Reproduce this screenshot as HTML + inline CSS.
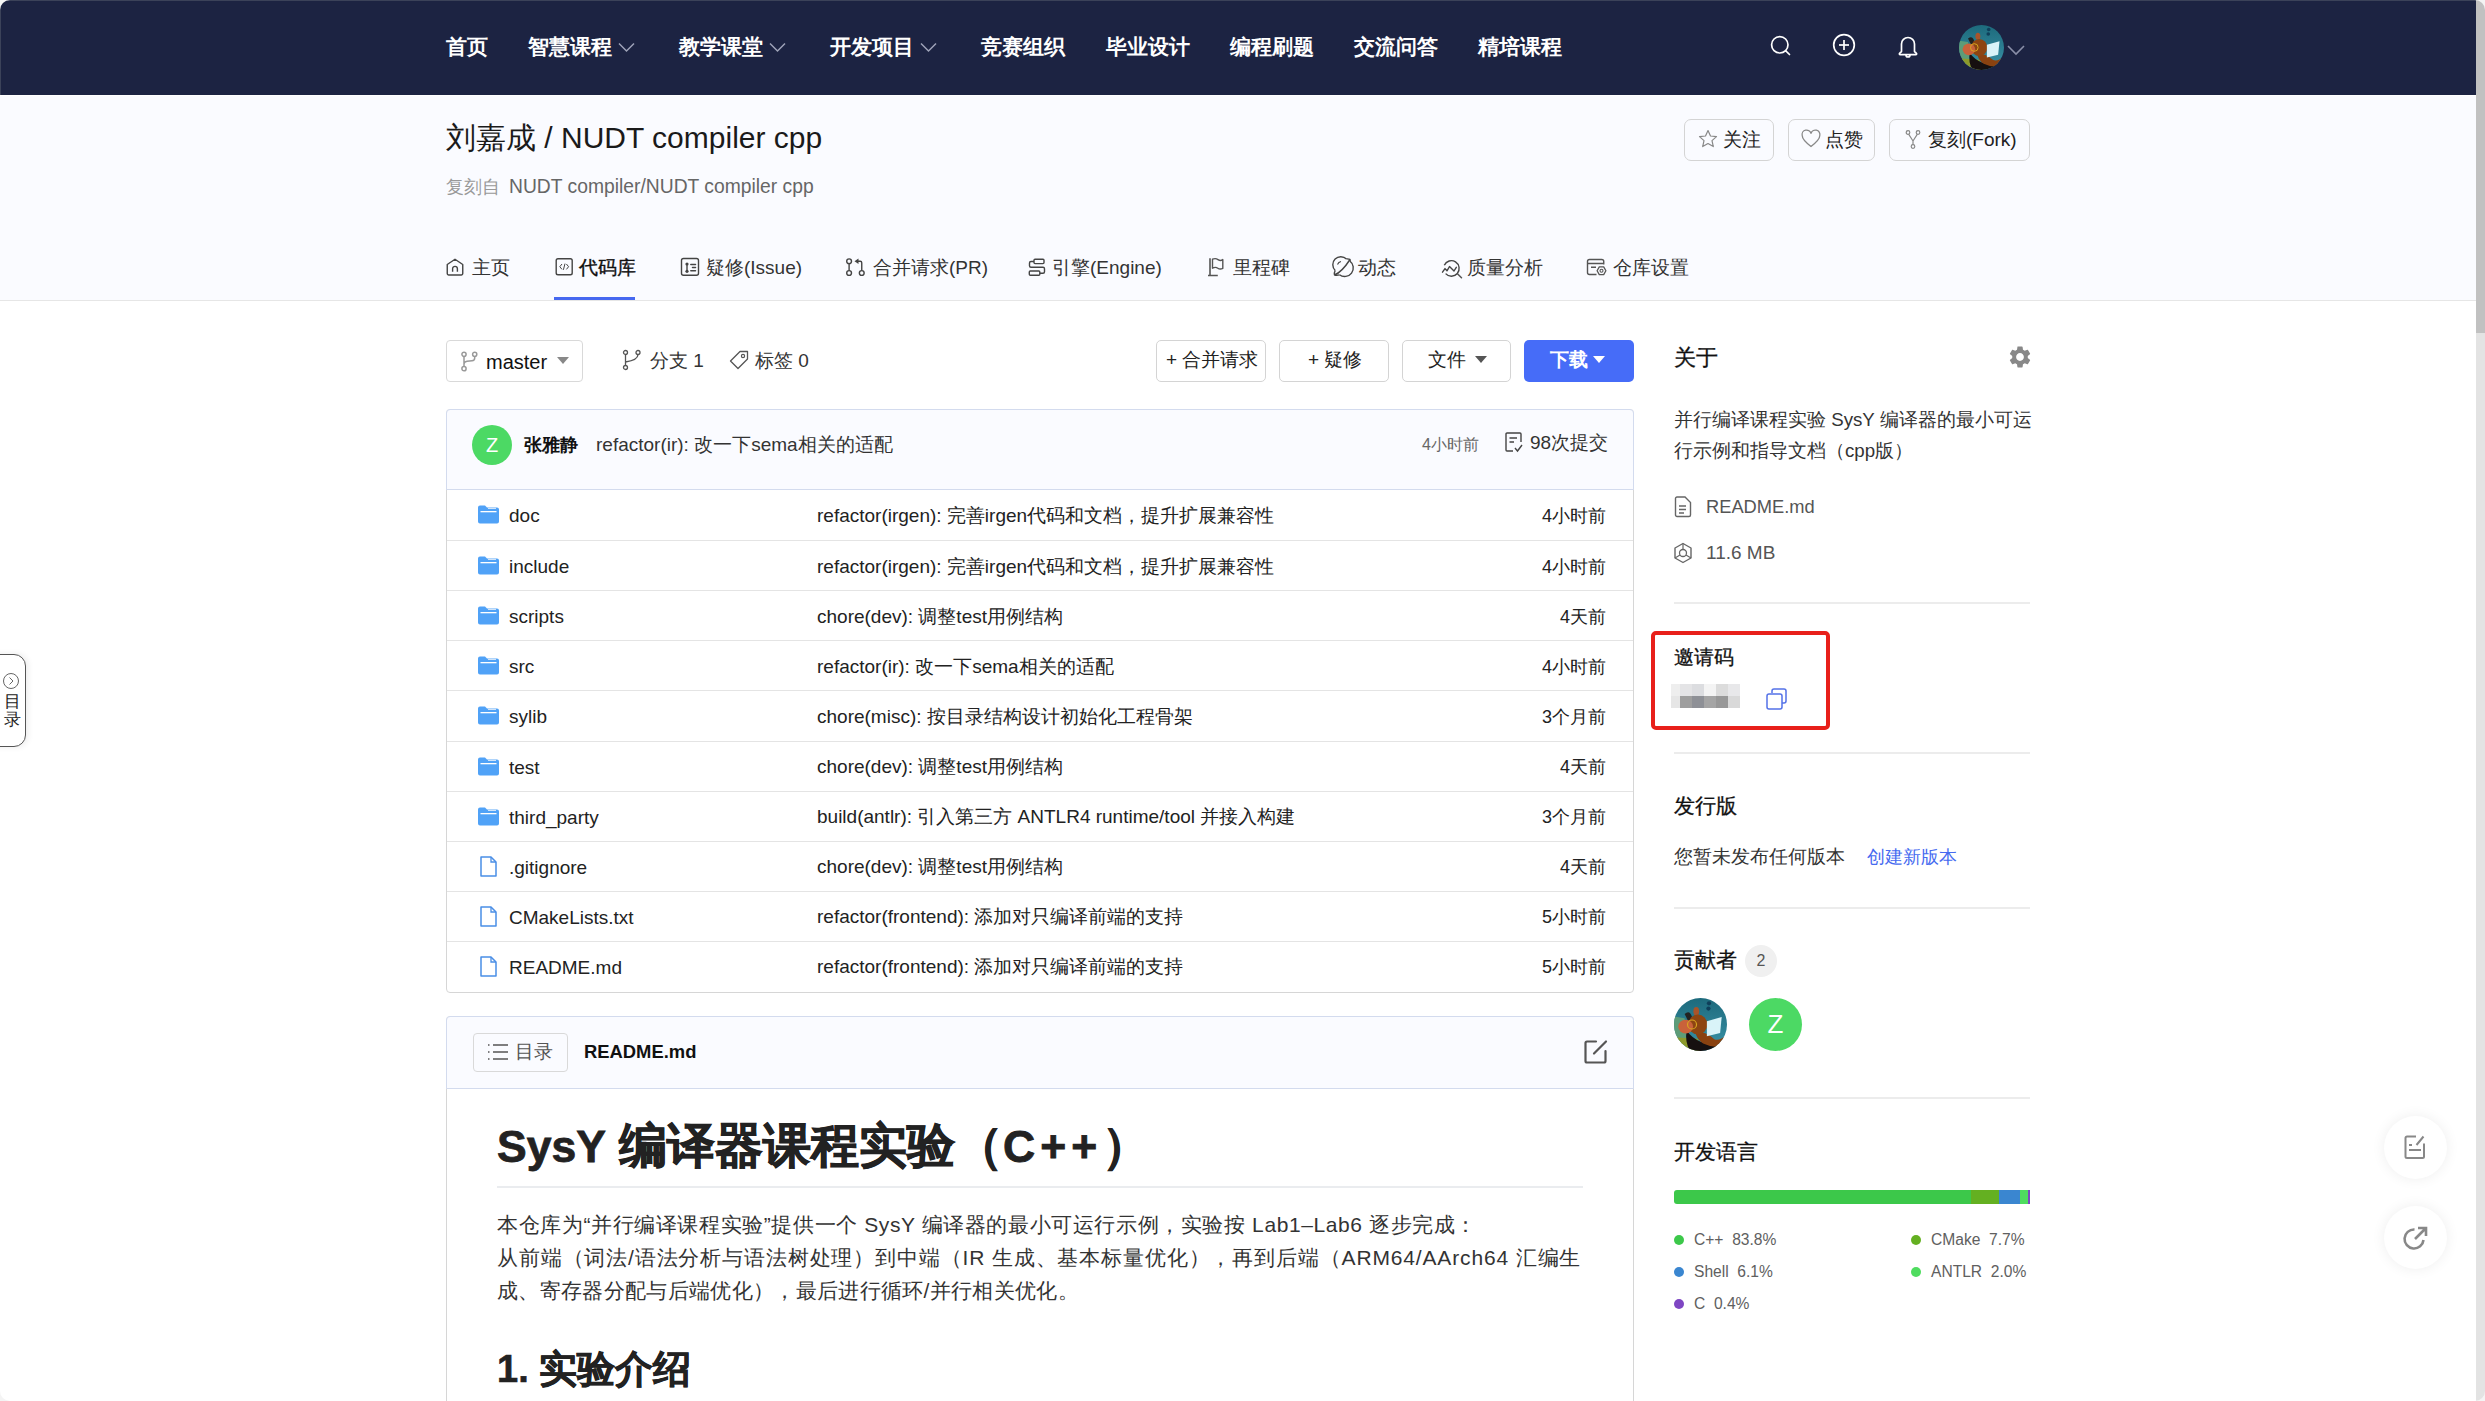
<!DOCTYPE html>
<html><head><meta charset="utf-8">
<style>
*{box-sizing:border-box;margin:0;padding:0}
html,body{width:2485px;height:1401px;overflow:hidden;background:#fff}
body{font-family:"Liberation Sans",sans-serif;color:#333;position:relative}
.a{position:absolute;white-space:nowrap}
svg{position:absolute;overflow:visible}
#hdr{position:absolute;left:0;top:0;width:2476px;height:95px;background:#1c2342}
.nav{position:absolute;top:33px;height:28px;line-height:28px;font-size:21px;color:#fff;font-weight:bold;white-space:nowrap}
#phead{position:absolute;left:0;top:96px;width:2476px;height:205px;background:#fafbff;border-bottom:1px solid #e6e6e6}
.btn{position:absolute;border:1px solid #d4d4d4;border-radius:7px;height:42px}
.tab{position:absolute;top:255px;height:26px;line-height:26px;font-size:19px;color:#333;white-space:nowrap}
.row{position:absolute;left:447px;width:1186px;height:50px;border-top:1px solid #e4e4e4}
.fn{position:absolute;left:62px;top:13px;font-size:19px;line-height:26px;color:#222;white-space:nowrap}
.cm{position:absolute;left:370px;top:12.5px;font-size:19px;line-height:26px;color:#222;white-space:nowrap}
.tm{position:absolute;right:27px;top:12.5px;font-size:18px;line-height:26px;color:#222;white-space:nowrap}
.sh{position:absolute;left:1674px;font-size:21px;line-height:28px;color:#111;white-space:nowrap;-webkit-text-stroke:0.3px #111}
.div{position:absolute;left:1674px;width:356px;height:2px;background:#ececec}
.lg{position:absolute;font-size:15.6px;line-height:20px;color:#606060;white-space:nowrap}
.dot{display:inline-block;width:10px;height:10px;border-radius:50%;margin-right:10px;vertical-align:0}
</style></head>
<body>
<!-- header -->
<div id="hdr"></div>
<div class="nav" style="left:446px">首页</div>
<div class="nav" style="left:528px">智慧课程</div>
<div class="nav" style="left:679px">教学课堂</div>
<div class="nav" style="left:830px">开发项目</div>
<div class="nav" style="left:981px">竞赛组织</div>
<div class="nav" style="left:1106px">毕业设计</div>
<div class="nav" style="left:1230px">编程刷题</div>
<div class="nav" style="left:1354px">交流问答</div>
<div class="nav" style="left:1478px">精培课程</div>


<svg style="left:618px;top:42px" width="17" height="11" viewBox="0 0 17 11"><polyline points="1,1.5 8.5,9 16,1.5" fill="none" stroke="#9ea3b8" stroke-width="1.5"/></svg>
<svg style="left:769px;top:42px" width="17" height="11" viewBox="0 0 17 11"><polyline points="1,1.5 8.5,9 16,1.5" fill="none" stroke="#9ea3b8" stroke-width="1.5"/></svg>
<svg style="left:920px;top:42px" width="17" height="11" viewBox="0 0 17 11"><polyline points="1,1.5 8.5,9 16,1.5" fill="none" stroke="#9ea3b8" stroke-width="1.5"/></svg>
<!-- header icons -->
<svg style="left:1768px;top:33px" width="26" height="26" viewBox="0 0 26 26"><circle cx="11.8" cy="11.8" r="8.2" fill="none" stroke="#fff" stroke-width="1.7"/><line x1="17.8" y1="17.8" x2="21.5" y2="21.5" stroke="#fff" stroke-width="1.7" stroke-linecap="round"/></svg>
<svg style="left:1831px;top:32px" width="26" height="26" viewBox="0 0 26 26"><circle cx="13" cy="13" r="10.3" fill="none" stroke="#fff" stroke-width="1.7"/><line x1="13" y1="8" x2="13" y2="18" stroke="#fff" stroke-width="1.7"/><line x1="8" y1="13" x2="18" y2="13" stroke="#fff" stroke-width="1.7"/></svg>
<svg style="left:1895px;top:33px" width="26" height="26" viewBox="0 0 26 26"><path d="M6.5 18.5 V11 a6.5 6.5 0 0 1 13 0 V18.5 l1.8 1.6 a0.9 0.9 0 0 1 -0.6 1.6 H5.3 a0.9 0.9 0 0 1 -0.6 -1.6 Z" fill="none" stroke="#fff" stroke-width="1.7" stroke-linejoin="round"/><path d="M11 22 a2 2 0 0 0 4 0" fill="none" stroke="#fff" stroke-width="1.7"/></svg>
<svg style="left:1959px;top:25px" width="45" height="45" viewBox="0 0 100 100"><defs><clipPath id="j1"><circle cx="50" cy="50" r="50"/></clipPath><linearGradient id="j1g" x1="0" y1="0" x2="0" y2="1"><stop offset="0" stop-color="#1d6a7c"/><stop offset="1" stop-color="#3a93a8"/></linearGradient></defs><g clip-path="url(#j1)"><rect width="100" height="100" fill="url(#j1g)"/><path d="M0 35 L20 38 L25 100 L0 100 Z" fill="#5d9c78"/><path d="M0 74 L45 77 L50 100 L0 100 Z" fill="#8d9a2c"/><circle cx="66" cy="10" r="4" fill="#0f3f5a"/><circle cx="65" cy="20" r="4" fill="#0f3f5a"/><path d="M24 62 Q45 92 100 90 L100 100 L30 100 Q20 82 24 62 Z" fill="#161010"/><path d="M20 30 Q30 22 34 36 L28 46 Z" fill="#222"/><ellipse cx="42" cy="25" rx="5.5" ry="8" fill="#a9542a"/><path d="M40 62 Q62 64 76 78 Q86 82 99 70 L100 86 Q80 98 55 86 Q42 78 40 62 Z" fill="#8a4210"/><ellipse cx="45" cy="50" rx="18" ry="19" fill="#8d4512"/><ellipse cx="22" cy="54" rx="14" ry="13" fill="#c9623a"/><path d="M62 44 L90 36 L87 66 L62 72 Z" fill="#d9f3f8"/><circle cx="34" cy="50" r="8.5" fill="none" stroke="#d9a520" stroke-width="2.2"/></g></svg>
<svg style="left:2007px;top:44px" width="18" height="12" viewBox="0 0 18 12"><polyline points="1,2 9,10 17,2" fill="none" stroke="#8a8fa8" stroke-width="1.6"/></svg>

<!-- page header -->
<div id="phead"></div>
<div class="a" style="left:446px;top:118px;font-size:30px;line-height:40px;color:#1a1a1a">刘嘉成 / NUDT compiler cpp</div>
<div class="a" style="left:446px;top:174px;font-size:18px;line-height:26px;color:#999">复刻自 <span style="color:#666;font-size:19.3px;margin-left:4px">NUDT compiler/NUDT compiler cpp</span></div>

<div class="btn" style="left:1684px;top:119px;width:90px"></div>
<div class="btn" style="left:1788px;top:119px;width:87px"></div>
<div class="btn" style="left:1889px;top:119px;width:141px"></div>


<svg style="left:1698px;top:129px" width="20" height="20" viewBox="0 0 20 20"><path d="M10 1.5 L12.5 7 L18.5 7.6 L14 11.6 L15.3 17.6 L10 14.5 L4.7 17.6 L6 11.6 L1.5 7.6 L7.5 7 Z" fill="none" stroke="#888" stroke-width="1.2" stroke-linejoin="round"/></svg>
<div class="a" style="left:1723px;top:127px;font-size:19px;line-height:26px;color:#222">关注</div>
<svg style="left:1801px;top:130px" width="20" height="18" viewBox="0 0 20 18"><path d="M10 16.5 C4 12 1.2 8.8 1.2 5.6 A4.3 4.3 0 0 1 10 3.6 A4.3 4.3 0 0 1 18.8 5.6 C18.8 8.8 16 12 10 16.5 Z" fill="none" stroke="#888" stroke-width="1.3"/></svg>
<div class="a" style="left:1825px;top:127px;font-size:19px;line-height:26px;color:#222">点赞</div>
<svg style="left:1905px;top:130px" width="16" height="19" viewBox="0 0 16 19"><circle cx="3" cy="2.5" r="1.8" fill="none" stroke="#888" stroke-width="1.2"/><circle cx="13" cy="2.5" r="1.8" fill="none" stroke="#888" stroke-width="1.2"/><circle cx="8" cy="16.5" r="1.8" fill="none" stroke="#888" stroke-width="1.2"/><path d="M3.6 4.2 L8 11 L12.4 4.2 M8 11 V14.7" fill="none" stroke="#888" stroke-width="1.2"/></svg>
<div class="a" style="left:1928px;top:127px;font-size:19px;line-height:26px;color:#222">复刻(Fork)</div>

<!-- tabs -->
<div class="tab" style="left:472px">主页</div>
<div class="tab" style="left:579px;color:#111;-webkit-text-stroke:0.35px #111">代码库</div>
<div class="tab" style="left:706px">疑修(Issue)</div>
<div class="tab" style="left:873px">合并请求(PR)</div>
<div class="tab" style="left:1052px">引擎(Engine)</div>
<div class="tab" style="left:1233px">里程碑</div>
<div class="tab" style="left:1358px">动态</div>
<div class="tab" style="left:1467px">质量分析</div>
<div class="tab" style="left:1613px">仓库设置</div>
<div class="a" style="left:554px;top:297px;width:81px;height:3px;background:#4668f0"></div>


<svg style="left:440px;top:250px" width="36" height="36" viewBox="0 0 36 36"><path d="M7.25 14.5 L15 9.25 L22.75 14.5 V23.5 a1.5 1.5 0 0 1 -1.5 1.5 H8.75 a1.5 1.5 0 0 1 -1.5 -1.5 Z" fill="none" stroke="#444" stroke-width="1.4" stroke-linejoin="round"/><path d="M12.6 21.75 V18.8 a2.4 2.4 0 0 1 4.8 0 V21.75" fill="none" stroke="#444" stroke-width="1.4"/></svg>
<svg style="left:550px;top:250px" width="36" height="36" viewBox="0 0 36 36"><rect x="6.2" y="8.7" width="16" height="16" rx="1.8" fill="none" stroke="#444" stroke-width="1.4"/><path d="M12 14 L9.8 16.7 L12 19.4 M16.4 14 L18.6 16.7 L16.4 19.4 M15 13.6 L13.4 19.8" fill="none" stroke="#444" stroke-width="1"/></svg>
<svg style="left:675px;top:250px" width="36" height="36" viewBox="0 0 36 36"><rect x="6.5" y="8.5" width="17" height="16.8" rx="2" fill="none" stroke="#444" stroke-width="1.4"/><path d="M12 14 V21.3" fill="none" stroke="#444" stroke-width="1.4"/><circle cx="12" cy="14" r="1.6" fill="#444"/><circle cx="12" cy="21.3" r="1.6" fill="#444"/><path d="M15.8 14.4 H20.5 M17.5 17.5 H20.5 M15.8 20.75 H20.5" fill="none" stroke="#444" stroke-width="1.5" stroke-linecap="round"/></svg>
<svg style="left:840px;top:250px" width="36" height="36" viewBox="0 0 36 36"><circle cx="9.1" cy="11.25" r="2.4" fill="none" stroke="#444" stroke-width="1.4"/><circle cx="9.1" cy="23" r="2.4" fill="none" stroke="#444" stroke-width="1.4"/><circle cx="21.75" cy="23" r="2.4" fill="none" stroke="#444" stroke-width="1.4"/><path d="M9.1 13.65 V20.6 M21.75 20.6 V12.75 a1.5 1.5 0 0 0 -1.5 -1.5 H16.5" fill="none" stroke="#444" stroke-width="1.4"/><path d="M14.5 11.25 L18.5 8.6 V13.9 Z" fill="#444"/></svg>
<svg style="left:1020px;top:250px" width="36" height="36" viewBox="0 0 36 36"><rect x="14" y="9.3" width="10" height="4.3" rx="1" fill="none" stroke="#444" stroke-width="1.4"/><rect x="9.3" y="21" width="10.5" height="4.3" rx="1" fill="none" stroke="#444" stroke-width="1.4"/><path d="M14 11.5 H11 a1.5 1.5 0 0 0 -1.5 1.5 V15.7 a1.5 1.5 0 0 0 1.5 1.5 H23 a1.5 1.5 0 0 1 1.5 1.5 V21.7 a1.5 1.5 0 0 1 -1.5 1.5 H19.8" fill="none" stroke="#444" stroke-width="1.4"/></svg>
<svg style="left:1200px;top:250px" width="36" height="36" viewBox="0 0 36 36"><path d="M10 8.3 V25.5 M8 25.5 H17.8" fill="none" stroke="#555" stroke-width="1.6"/><path d="M12.5 9.2 Q15.5 7.8 18 9.6 T22.8 9.6 V18.4 Q20 19.8 17.8 18.2 T12.5 18.2 Z" fill="none" stroke="#555" stroke-width="1.4" stroke-linejoin="round"/></svg>
<svg style="left:1325px;top:250px" width="36" height="36" viewBox="0 0 36 36"><path d="M24.8 11 A8 8 0 0 1 14.5 24.8 M10.2 20.5 A8 8 0 0 1 21.5 9" fill="none" stroke="#444" stroke-width="1.4"/><path d="M9.5 25 Q17 22 25 9.5" fill="none" stroke="#444" stroke-width="1.4"/><path d="M9.5 25 Q9 22.5 10.2 20.5 M9.5 25 Q12 25.5 14.5 24.8 M25 9.5 Q25.5 10 24.8 11 M25 9.5 Q23 8.5 21.5 9" fill="none" stroke="#444" stroke-width="1.4"/><path d="M12.5 14.5 Q13.5 12 16 11.5" fill="none" stroke="#444" stroke-width="1.1"/></svg>
<svg style="left:1435px;top:250px" width="36" height="36" viewBox="0 0 36 36"><path d="M9.3 15.3 A7.75 7.75 0 1 1 10.6 23.6" fill="none" stroke="#444" stroke-width="1.4"/><path d="M22.7 24 L26.5 27.8" fill="none" stroke="#555" stroke-width="1.5" stroke-linecap="round"/><path d="M7.5 22.2 L10 18.6 L12 20.8 L14.5 16.5 L19 21 L21.3 17.3" fill="none" stroke="#444" stroke-width="1.4" stroke-linejoin="round" stroke-linecap="round"/></svg>
<svg style="left:1580px;top:250px" width="36" height="36" viewBox="0 0 36 36"><path d="M16.5 24.5 H9.5 a2 2 0 0 1 -2 -2 V11.5 a2 2 0 0 1 2 -2 H21.75 a2 2 0 0 1 2 2 V14.5 M7.5 13.5 H23.75 M11 17.25 H16" fill="none" stroke="#555" stroke-width="1.4"/><path d="M19.3 16.9 H23.7 L25.9 20.75 L23.7 24.6 H19.3 L17.1 20.75 Z" fill="none" stroke="#555" stroke-width="1.3" stroke-linejoin="round"/><circle cx="21.5" cy="20.75" r="1.5" fill="none" stroke="#555" stroke-width="1.1"/></svg>

<!-- toolbar -->
<div class="btn" style="left:446px;top:340px;width:137px;height:42px;border-radius:4px;border-color:#d9d9d9"></div>
<svg style="left:460px;top:351px" width="18" height="22" viewBox="0 0 18 22"><circle cx="4" cy="3.3" r="2.1" fill="none" stroke="#999" stroke-width="1.5"/><circle cx="4" cy="17.7" r="2.1" fill="none" stroke="#999" stroke-width="1.5"/><circle cx="14.7" cy="3.3" r="2.1" fill="none" stroke="#999" stroke-width="1.5"/><path d="M4 5.4 V15.6 M14.7 5.4 V7 Q14.7 9.5 12 9.7 L7 10.3 Q4 10.7 4 13" fill="none" stroke="#999" stroke-width="1.5"/></svg>
<div class="a" style="left:486px;top:348px;font-size:20px;line-height:28px;color:#111">master</div>
<svg style="left:557px;top:357px" width="12" height="8" viewBox="0 0 12 8"><path d="M0 0 H12 L6 7 Z" fill="#888"/></svg>
<svg style="left:622px;top:349px" width="20" height="22" viewBox="0 0 20 22"><circle cx="3.5" cy="18.5" r="2" fill="none" stroke="#555" stroke-width="1.3"/><circle cx="3.5" cy="3.5" r="2" fill="none" stroke="#555" stroke-width="1.3"/><circle cx="16" cy="3.5" r="2" fill="none" stroke="#555" stroke-width="1.3"/><path d="M3.5 5.5 V16.5 M16 5.5 Q16 11 3.5 13" fill="none" stroke="#555" stroke-width="1.3"/></svg>
<div class="a" style="left:650px;top:347px;font-size:19px;line-height:28px;color:#333">分支 1</div>
<svg style="left:729px;top:350px" width="20" height="20" viewBox="0 0 20 20"><path d="M11 1.5 H18.5 V9 L9 18.5 L1.5 11 Z" fill="none" stroke="#555" stroke-width="1.3" stroke-linejoin="round" transform="rotate(0)"/><circle cx="14" cy="6" r="1.6" fill="none" stroke="#555" stroke-width="1.2"/></svg>
<div class="a" style="left:755px;top:347px;font-size:19px;line-height:28px;color:#333">标签 0</div>

<div class="btn" style="left:1156px;top:340px;width:110px;height:42px;border-radius:5px"></div>
<div class="a" style="left:1166px;top:347px;font-size:19px;line-height:26px;color:#222">+ 合并请求</div>
<div class="btn" style="left:1279px;top:340px;width:110px;height:42px;border-radius:5px"></div>
<div class="a" style="left:1308px;top:347px;font-size:19px;line-height:26px;color:#222">+ 疑修</div>
<div class="btn" style="left:1402px;top:340px;width:109px;height:42px;border-radius:5px"></div>
<div class="a" style="left:1428px;top:347px;font-size:19px;line-height:26px;color:#222">文件</div>
<svg style="left:1475px;top:356px" width="12" height="8" viewBox="0 0 12 8"><path d="M0 0 H12 L6 7 Z" fill="#555"/></svg>
<div class="a" style="left:1524px;top:340px;width:110px;height:42px;border-radius:5px;background:#466cf8"></div>
<div class="a" style="left:1550px;top:347px;font-size:19px;line-height:26px;color:#fff;font-weight:bold">下载</div>
<svg style="left:1593px;top:356px" width="12" height="8" viewBox="0 0 12 8"><path d="M0 0 H12 L6 7 Z" fill="#fff"/></svg>

<!-- commit box -->
<div class="a" style="left:446px;top:409px;width:1188px;height:584px;border:1px solid #d6d6d6;border-radius:4px;background:#fff"></div>
<div class="a" style="left:446px;top:409px;width:1188px;height:81px;background:#fafbff;border:1px solid #d3dbee;border-radius:4px 4px 0 0"></div>
<div class="a" style="left:472px;top:425px;width:40px;height:40px;border-radius:50%;background:#4cd964;color:#fff;font-size:20px;line-height:40px;text-align:center">Z</div>
<div class="a" style="left:524px;top:432px;font-size:18px;line-height:26px;color:#111;font-weight:bold">张雅静</div>
<div class="a" style="left:596px;top:432px;font-size:19px;line-height:26px;color:#333">refactor(ir): 改一下sema相关的适配</div>
<div class="a" style="left:1422px;top:433px;font-size:16px;line-height:24px;color:#666">4小时前</div>
<svg style="left:1505px;top:432px" width="18" height="22" viewBox="0 0 18 22"><path d="M8 19 H2 a1 1 0 0 1 -1 -1 V2 a1 1 0 0 1 1 -1 H15 a1 1 0 0 1 1 1 V10 M4.5 6 H12 M4.5 10 H9" fill="none" stroke="#444" stroke-width="1.4"/><path d="M10 16 L12.5 19 L17 13" fill="none" stroke="#444" stroke-width="1.4"/></svg>
<div class="a" style="left:1530px;top:430px;font-size:19px;line-height:26px;color:#333">98次提交</div>
<div class="row" style="top:490px;border-top:none;"><svg style="left:31px;top:15px" width="21" height="19" viewBox="0 0 21 19"><path d="M0 2.5 a2 2 0 0 1 2 -2 H7 l2 2 H19 a2 2 0 0 1 2 2 V16.5 a2 2 0 0 1 -2 2 H2 a2 2 0 0 1 -2 -2 Z" fill="#50a2f7"/><rect x="2.5" y="6" width="16" height="1.3" fill="#fff"/><rect x="10" y="2.8" width="8" height="1.2" fill="#cfe4fb"/></svg><div class="fn">doc</div><div class="cm">refactor(irgen): 完善irgen代码和文档，提升扩展兼容性</div><div class="tm">4小时前</div></div>
<div class="row" style="top:540.1px;"><svg style="left:31px;top:15px" width="21" height="19" viewBox="0 0 21 19"><path d="M0 2.5 a2 2 0 0 1 2 -2 H7 l2 2 H19 a2 2 0 0 1 2 2 V16.5 a2 2 0 0 1 -2 2 H2 a2 2 0 0 1 -2 -2 Z" fill="#50a2f7"/><rect x="2.5" y="6" width="16" height="1.3" fill="#fff"/><rect x="10" y="2.8" width="8" height="1.2" fill="#cfe4fb"/></svg><div class="fn">include</div><div class="cm">refactor(irgen): 完善irgen代码和文档，提升扩展兼容性</div><div class="tm">4小时前</div></div>
<div class="row" style="top:590.2px;"><svg style="left:31px;top:15px" width="21" height="19" viewBox="0 0 21 19"><path d="M0 2.5 a2 2 0 0 1 2 -2 H7 l2 2 H19 a2 2 0 0 1 2 2 V16.5 a2 2 0 0 1 -2 2 H2 a2 2 0 0 1 -2 -2 Z" fill="#50a2f7"/><rect x="2.5" y="6" width="16" height="1.3" fill="#fff"/><rect x="10" y="2.8" width="8" height="1.2" fill="#cfe4fb"/></svg><div class="fn">scripts</div><div class="cm">chore(dev): 调整test用例结构</div><div class="tm">4天前</div></div>
<div class="row" style="top:640.3000000000001px;"><svg style="left:31px;top:15px" width="21" height="19" viewBox="0 0 21 19"><path d="M0 2.5 a2 2 0 0 1 2 -2 H7 l2 2 H19 a2 2 0 0 1 2 2 V16.5 a2 2 0 0 1 -2 2 H2 a2 2 0 0 1 -2 -2 Z" fill="#50a2f7"/><rect x="2.5" y="6" width="16" height="1.3" fill="#fff"/><rect x="10" y="2.8" width="8" height="1.2" fill="#cfe4fb"/></svg><div class="fn">src</div><div class="cm">refactor(ir): 改一下sema相关的适配</div><div class="tm">4小时前</div></div>
<div class="row" style="top:690.4000000000001px;"><svg style="left:31px;top:15px" width="21" height="19" viewBox="0 0 21 19"><path d="M0 2.5 a2 2 0 0 1 2 -2 H7 l2 2 H19 a2 2 0 0 1 2 2 V16.5 a2 2 0 0 1 -2 2 H2 a2 2 0 0 1 -2 -2 Z" fill="#50a2f7"/><rect x="2.5" y="6" width="16" height="1.3" fill="#fff"/><rect x="10" y="2.8" width="8" height="1.2" fill="#cfe4fb"/></svg><div class="fn">sylib</div><div class="cm">chore(misc): 按目录结构设计初始化工程骨架</div><div class="tm">3个月前</div></div>
<div class="row" style="top:740.5000000000001px;"><svg style="left:31px;top:15px" width="21" height="19" viewBox="0 0 21 19"><path d="M0 2.5 a2 2 0 0 1 2 -2 H7 l2 2 H19 a2 2 0 0 1 2 2 V16.5 a2 2 0 0 1 -2 2 H2 a2 2 0 0 1 -2 -2 Z" fill="#50a2f7"/><rect x="2.5" y="6" width="16" height="1.3" fill="#fff"/><rect x="10" y="2.8" width="8" height="1.2" fill="#cfe4fb"/></svg><div class="fn">test</div><div class="cm">chore(dev): 调整test用例结构</div><div class="tm">4天前</div></div>
<div class="row" style="top:790.6000000000001px;"><svg style="left:31px;top:15px" width="21" height="19" viewBox="0 0 21 19"><path d="M0 2.5 a2 2 0 0 1 2 -2 H7 l2 2 H19 a2 2 0 0 1 2 2 V16.5 a2 2 0 0 1 -2 2 H2 a2 2 0 0 1 -2 -2 Z" fill="#50a2f7"/><rect x="2.5" y="6" width="16" height="1.3" fill="#fff"/><rect x="10" y="2.8" width="8" height="1.2" fill="#cfe4fb"/></svg><div class="fn">third_party</div><div class="cm">build(antlr): 引入第三方 ANTLR4 runtime/tool 并接入构建</div><div class="tm">3个月前</div></div>
<div class="row" style="top:840.7000000000002px;"><svg style="left:33px;top:14px" width="17" height="21" viewBox="0 0 17 21"><path d="M1 1 H11 L16 6 V20 H1 Z" fill="none" stroke="#4a8ee6" stroke-width="1.5" stroke-linejoin="round"/><path d="M11 1 V6 H16" fill="none" stroke="#4a8ee6" stroke-width="1.3"/></svg><div class="fn">.gitignore</div><div class="cm">chore(dev): 调整test用例结构</div><div class="tm">4天前</div></div>
<div class="row" style="top:890.8000000000002px;"><svg style="left:33px;top:14px" width="17" height="21" viewBox="0 0 17 21"><path d="M1 1 H11 L16 6 V20 H1 Z" fill="none" stroke="#4a8ee6" stroke-width="1.5" stroke-linejoin="round"/><path d="M11 1 V6 H16" fill="none" stroke="#4a8ee6" stroke-width="1.3"/></svg><div class="fn">CMakeLists.txt</div><div class="cm">refactor(frontend): 添加对只编译前端的支持</div><div class="tm">5小时前</div></div>
<div class="row" style="top:940.9000000000002px;"><svg style="left:33px;top:14px" width="17" height="21" viewBox="0 0 17 21"><path d="M1 1 H11 L16 6 V20 H1 Z" fill="none" stroke="#4a8ee6" stroke-width="1.5" stroke-linejoin="round"/><path d="M11 1 V6 H16" fill="none" stroke="#4a8ee6" stroke-width="1.3"/></svg><div class="fn">README.md</div><div class="cm">refactor(frontend): 添加对只编译前端的支持</div><div class="tm">5小时前</div></div>


<!-- readme -->
<div class="a" style="left:446px;top:1016px;width:1188px;height:400px;border:1px solid #d6d6d6;border-radius:4px;background:#fff"></div>
<div class="a" style="left:446px;top:1016px;width:1188px;height:73px;background:#fafbff;border:1px solid #d3dbee;border-radius:4px 4px 0 0"></div>
<div class="a" style="left:473px;top:1033px;width:95px;height:39px;border:1px solid #d9d9d9;border-radius:4px;background:#fafbff"></div>
<svg style="left:487px;top:1043px" width="22" height="18" viewBox="0 0 22 18"><path d="M1 2 H2.5 M1 9 H2.5 M1 16 H2.5 M6 2 H21 M6 9 H21 M6 16 H21" fill="none" stroke="#555" stroke-width="1.4"/></svg>
<div class="a" style="left:515px;top:1039px;font-size:19px;line-height:26px;color:#555">目录</div>
<div class="a" style="left:584px;top:1039px;font-size:18.4px;line-height:26px;color:#111;font-weight:bold">README.md</div>
<svg style="left:1583px;top:1039px" width="26" height="26" viewBox="0 0 26 26"><path d="M13 2.5 H4 a1.5 1.5 0 0 0 -1.5 1.5 V22 a1.5 1.5 0 0 0 1.5 1.5 H21 a1.5 1.5 0 0 0 1.5 -1.5 V12" fill="none" stroke="#555" stroke-width="2.2" stroke-linecap="round"/><path d="M11 14.5 L23 2.5" fill="none" stroke="#555" stroke-width="2.2" stroke-linecap="round"/></svg>
<div class="a" style="left:497px;top:1113px;font-size:47.5px;line-height:66px;color:#222;font-weight:bold;-webkit-text-stroke:0.8px #222"><span style="font-size:44.5px">SysY</span> 编译器课程实验（<span style="font-size:44.5px;letter-spacing:5px">C++</span>）</div>
<div class="a" style="left:497px;top:1186px;width:1086px;height:2px;background:#eaecef"></div>
<div class="a" style="left:497px;top:1208px;font-size:21px;line-height:33px;color:#333;letter-spacing:0.6px">本仓库为“并行编译课程实验”提供一个 SysY 编译器的最小可运行示例，实验按 Lab1–Lab6 逐步完成：</div>
<div class="a" style="left:497px;top:1241px;font-size:21px;line-height:33px;color:#333;letter-spacing:0.85px">从前端（词法/语法分析与语法树处理）到中端（IR 生成、基本标量优化），再到后端（ARM64/AArch64 汇编生</div>
<div class="a" style="left:497px;top:1274px;font-size:21px;line-height:33px;color:#333;letter-spacing:0.33px">成、寄存器分配与后端优化），最后进行循环/并行相关优化。</div>
<div class="a" style="left:497px;top:1344px;font-size:38px;line-height:50px;color:#222;font-weight:bold;-webkit-text-stroke:0.6px #222">1. 实验介绍</div>

<!-- sidebar -->
<div class="sh" style="top:344px;font-size:22px">关于</div>
<svg style="left:2007px;top:344px" width="26" height="26" viewBox="0 0 24 24"><path fill="#888" d="M19.14 12.94c.04-.3.06-.61.06-.94 0-.32-.02-.64-.07-.94l2.03-1.58a.49.49 0 0 0 .12-.61l-1.92-3.32a.488.488 0 0 0-.59-.22l-2.39.96c-.5-.38-1.03-.7-1.62-.94l-.36-2.54a.484.484 0 0 0-.48-.41h-3.84c-.24 0-.43.17-.47.41l-.36 2.54c-.59.24-1.13.57-1.62.94l-2.39-.96c-.22-.08-.47 0-.59.22L2.74 8.87c-.12.21-.08.47.12.61l2.03 1.58c-.05.3-.09.63-.09.94s.02.64.07.94l-2.03 1.58a.49.49 0 0 0-.12.61l1.92 3.32c.12.22.37.29.59.22l2.39-.96c.5.38 1.03.7 1.62.94l.36 2.54c.05.24.24.41.48.41h3.84c.24 0 .44-.17.47-.41l.36-2.54c.59-.24 1.13-.56 1.62-.94l2.39.96c.22.08.47 0 .59-.22l1.92-3.32c.12-.22.07-.47-.12-.61l-2.01-1.58zM12 15.6c-1.98 0-3.6-1.62-3.6-3.6s1.62-3.6 3.6-3.6 3.6 1.62 3.6 3.6-1.62 3.6-3.6 3.6z"/></svg>
<div class="a" style="left:1674px;top:404px;font-size:18.7px;line-height:31px;color:#333">并行编译课程实验 SysY 编译器的最小可运<br>行示例和指导文档（cpp版）</div>
<svg style="left:1674px;top:496px" width="18" height="22" viewBox="0 0 18 22"><path d="M1.5 2.5 a1.5 1.5 0 0 1 1.5 -1.5 H11 L16.5 6.5 V19 a1.5 1.5 0 0 1 -1.5 1.5 H3 a1.5 1.5 0 0 1 -1.5 -1.5 Z" fill="none" stroke="#666" stroke-width="1.4"/><path d="M5 10 H12 M5 13.5 H12 M5 17 H10" fill="none" stroke="#666" stroke-width="1.3"/></svg>
<div class="a" style="left:1706px;top:494px;font-size:18.3px;line-height:26px;color:#555">README.md</div>
<svg style="left:1673px;top:542px" width="20" height="22" viewBox="0 0 20 22"><path d="M10 1.5 L18 6 V16 L10 20.5 L2 16 V6 Z" fill="none" stroke="#666" stroke-width="1.4" stroke-linejoin="round"/><circle cx="10" cy="11" r="3.5" fill="none" stroke="#666" stroke-width="1.3"/><path d="M10 7.5 V1.5 M7 13 L2 16 M13 13 L18 16" fill="none" stroke="#666" stroke-width="1.2"/></svg>
<div class="a" style="left:1706px;top:540px;font-size:19px;line-height:26px;color:#555">11.6 MB</div>
<div class="div" style="top:602px"></div>

<div class="a" style="left:1651px;top:631px;width:179px;height:99px;border:4px solid #e8201a;border-radius:5px"></div>
<div class="sh" style="top:643px;font-size:20px">邀请码</div>
<div class="a" style="left:1671px;top:684px;width:9px;height:12px;background:#eeeeee"></div><div class="a" style="left:1671px;top:696px;width:9px;height:12px;background:#e6e6e6"></div><div class="a" style="left:1680px;top:684px;width:12px;height:12px;background:#e4e4e6"></div><div class="a" style="left:1680px;top:696px;width:12px;height:12px;background:#9e9e9e"></div><div class="a" style="left:1692px;top:684px;width:12px;height:12px;background:#dcdde0"></div><div class="a" style="left:1692px;top:696px;width:12px;height:12px;background:#8e9096"></div><div class="a" style="left:1704px;top:684px;width:12px;height:12px;background:#f4f4f4"></div><div class="a" style="left:1704px;top:696px;width:12px;height:12px;background:#a5a5a5"></div><div class="a" style="left:1716px;top:684px;width:12px;height:12px;background:#dcdcdc"></div><div class="a" style="left:1716px;top:696px;width:12px;height:12px;background:#989898"></div><div class="a" style="left:1728px;top:684px;width:12px;height:12px;background:#e8e8ea"></div><div class="a" style="left:1728px;top:696px;width:12px;height:12px;background:#d9d9d9"></div>
<svg style="left:1765px;top:687px" width="24" height="24" viewBox="0 0 24 24"><path d="M7 6 V4 a2 2 0 0 1 2 -2 H19 a2 2 0 0 1 2 2 V14 a2 2 0 0 1 -2 2 H17" fill="none" stroke="#5472e8" stroke-width="1.5"/><rect x="2" y="7" width="15" height="15" rx="2" fill="none" stroke="#5472e8" stroke-width="1.5"/></svg>
<div class="div" style="top:752px"></div>

<div class="sh" style="top:792px">发行版</div>
<div class="a" style="left:1674px;top:844px;font-size:18.5px;line-height:26px;color:#333">您暂未发布任何版本</div>
<div class="a" style="left:1867px;top:844px;font-size:18px;line-height:26px;color:#466af0">创建新版本</div>
<div class="div" style="top:907px"></div>

<div class="sh" style="top:946px">贡献者</div>
<div class="a" style="left:1745px;top:945px;width:32px;height:32px;border-radius:50%;background:#f0f0f0;color:#555;font-size:16px;line-height:32px;text-align:center">2</div>
<svg style="left:1674px;top:998px" width="53" height="53" viewBox="0 0 100 100"><defs><clipPath id="j2"><circle cx="50" cy="50" r="50"/></clipPath><linearGradient id="j2g" x1="0" y1="0" x2="0" y2="1"><stop offset="0" stop-color="#1d6a7c"/><stop offset="1" stop-color="#3a93a8"/></linearGradient></defs><g clip-path="url(#j2)"><rect width="100" height="100" fill="url(#j2g)"/><path d="M0 35 L20 38 L25 100 L0 100 Z" fill="#5d9c78"/><path d="M0 74 L45 77 L50 100 L0 100 Z" fill="#8d9a2c"/><circle cx="66" cy="10" r="4" fill="#0f3f5a"/><circle cx="65" cy="20" r="4" fill="#0f3f5a"/><path d="M24 62 Q45 92 100 90 L100 100 L30 100 Q20 82 24 62 Z" fill="#161010"/><path d="M20 30 Q30 22 34 36 L28 46 Z" fill="#222"/><ellipse cx="42" cy="25" rx="5.5" ry="8" fill="#a9542a"/><path d="M40 62 Q62 64 76 78 Q86 82 99 70 L100 86 Q80 98 55 86 Q42 78 40 62 Z" fill="#8a4210"/><ellipse cx="45" cy="50" rx="18" ry="19" fill="#8d4512"/><ellipse cx="22" cy="54" rx="14" ry="13" fill="#c9623a"/><path d="M62 44 L90 36 L87 66 L62 72 Z" fill="#d9f3f8"/><circle cx="34" cy="50" r="8.5" fill="none" stroke="#d9a520" stroke-width="2.2"/></g></svg>
<div class="a" style="left:1749px;top:998px;width:53px;height:53px;border-radius:50%;background:#4cd964;color:#fff;font-size:26px;line-height:53px;text-align:center">Z</div>
<div class="div" style="top:1097px"></div>

<div class="sh" style="top:1138px">开发语言</div>
<div class="a" style="left:1674px;top:1190px;width:356px;height:14px;border-radius:3px 0 0 3px;overflow:hidden;background:#3cc84a">
 <div class="a" style="left:297px;top:0;width:28px;height:14px;background:#64b021"></div>
 <div class="a" style="left:325px;top:0;width:21px;height:14px;background:#3a86d0"></div>
 <div class="a" style="left:346px;top:0;width:8px;height:14px;background:#4fdc5f"></div>
 <div class="a" style="left:354px;top:0;width:2px;height:14px;background:#7e46c3"></div>
</div>
<div class="lg" style="left:1674px;top:1230px"><span class="dot" style="background:#3cc84a"></span>C++&nbsp; 83.8%</div>
<div class="lg" style="left:1911px;top:1230px"><span class="dot" style="background:#64b021"></span>CMake&nbsp; 7.7%</div>
<div class="lg" style="left:1674px;top:1262px"><span class="dot" style="background:#3a86d0"></span>Shell&nbsp; 6.1%</div>
<div class="lg" style="left:1911px;top:1262px"><span class="dot" style="background:#4fdc5f"></span>ANTLR&nbsp; 2.0%</div>
<div class="lg" style="left:1674px;top:1294px"><span class="dot" style="background:#7e46c3"></span>C&nbsp; 0.4%</div>

<!-- floating -->
<div class="a" style="left:-10px;top:654px;width:36px;height:93px;border:1.5px solid #555;border-radius:0 12px 12px 0;background:#fff;box-shadow:2px 0 6px rgba(0,0,0,0.08)"></div>
<svg style="left:2px;top:672px" width="18" height="18" viewBox="0 0 18 18"><circle cx="9" cy="9" r="7.5" fill="none" stroke="#666" stroke-width="1"/><path d="M7.5 5.5 L11 9 L7.5 12.5" fill="none" stroke="#666" stroke-width="1"/></svg>
<div class="a" style="left:4px;top:693px;font-size:17px;line-height:18px;color:#222;white-space:normal;width:18px">目录</div>
<div class="a" style="left:2384px;top:1116px;width:63px;height:63px;border-radius:50%;background:#fff;box-shadow:0 0 14px rgba(0,0,0,0.07)"></div>
<svg style="left:2404px;top:1135px" width="23" height="25" viewBox="0 0 23 25"><path d="M12 1.5 H3 a1.5 1.5 0 0 0 -1.5 1.5 V21.5 a1.5 1.5 0 0 0 1.5 1.5 H18.5 a1.5 1.5 0 0 0 1.5 -1.5 V8.5" fill="none" stroke="#888" stroke-width="2"/><path d="M5 10 H8 M5 15 H17 M12.5 10 L19.5 1.5" fill="none" stroke="#888" stroke-width="2"/></svg>
<div class="a" style="left:2384px;top:1206px;width:63px;height:63px;border-radius:50%;background:#fff;box-shadow:0 0 14px rgba(0,0,0,0.07)"></div>
<svg style="left:2402px;top:1225px" width="27" height="27" viewBox="0 0 27 27"><path d="M21.5 15 A9.5 9.5 0 1 1 12.5 4.5" fill="none" stroke="#888" stroke-width="2.6"/><path d="M13 14 L23 4 M16 3 H24 V11" fill="none" stroke="#888" stroke-width="2.6"/></svg>

<!-- scrollbar -->
<div class="a" style="left:2476px;top:0;width:9px;height:1401px;background:#e3e3e3"></div>
<div class="a" style="left:2476px;top:0;width:9px;height:333px;background:#c1c1c1"></div>


<!-- window frame -->
<div class="a" style="left:0;top:0;width:2476px;height:1px;background:#3b4259"></div>
<div class="a" style="left:0;top:0;width:1px;height:95px;background:#3b4259"></div>
<div class="a" style="left:0;top:0;width:2485px;height:1401px;border-radius:10px;box-shadow:0 0 0 40px #f4f4f4;pointer-events:none"></div>

<!-- main -->
</body></html>
